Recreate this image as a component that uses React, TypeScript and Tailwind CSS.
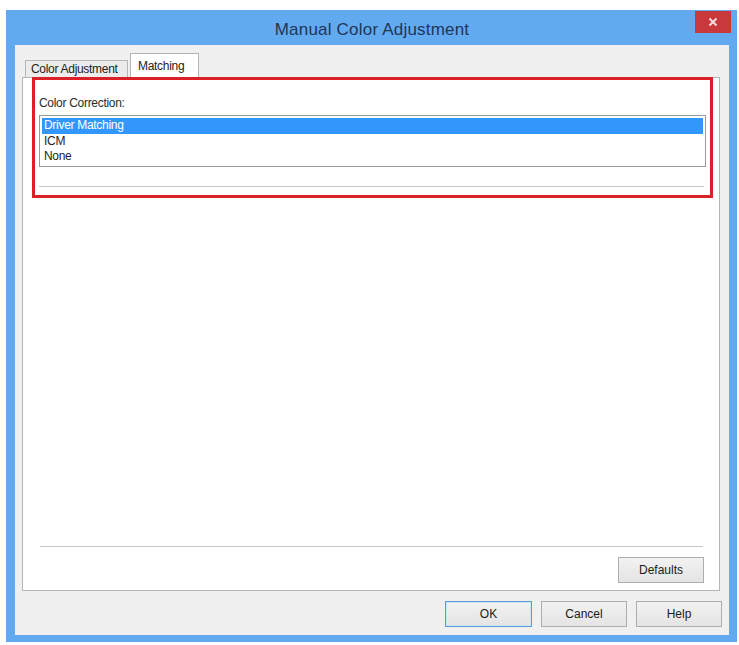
import React from 'react';

const font = { fontFamily: '"Liberation Sans", Arial, sans-serif' };

function WinButton({ label, primary }: { label: string; primary?: boolean }) {
  return (
    <button
      className={
        'h-[26px] text-[12px] text-[#1a1a1a] bg-gradient-to-b from-[#f2f2f2] to-[#e4e4e4] border ' +
        (primary ? 'border-[#5b9bd5] shadow-[inset_0_0_0_1px_#cfe6f7]' : 'border-[#adadad]')
      }
    >
      {label}
    </button>
  );
}

export default function App() {
  const items = ['Driver Matching', 'ICM', 'None'];

  return (
    <div className="w-[739px] h-[645px] bg-white pt-[10px] pl-[6px]" style={font}>
      <div className="w-[731px] h-[632px] bg-[#62aaf0] flex flex-col pl-[9px] pr-[8px] pb-[7px]">
        {/* title bar */}
        <div className="h-[35px] grid grid-cols-[1fr_auto_1fr] items-start">
          <div />
          <div className="pt-[7px] text-[17px] text-[#1f3556] tracking-[0.2px]">Manual Color Adjustment</div>
          <div className="flex justify-end pt-[1px] -mr-[2px]">
            <div className="w-[36px] h-[22px] bg-[#c9393b] flex items-center justify-center">
              <svg width="10" height="10" viewBox="0 0 10 10">
                <path d="M1.5 1.5 L8.5 8.5 M8.5 1.5 L1.5 8.5" stroke="#f6dede" strokeWidth="2" />
              </svg>
            </div>
          </div>
        </div>

        {/* client area */}
        <div className="flex-1 bg-[#f0f0f0] flex flex-col pl-[7px] pr-[9px] pt-[8px]">
          {/* tabs */}
          <div className="flex items-end h-[24px]">
            <div className="ml-[3px] w-[103px] h-[17px] pl-[5px] flex items-center text-[12px] text-[#222] bg-[#ececec] border border-b-0 border-[#b5b5b5] tracking-[-0.3px]">
              Color Adjustment
            </div>
            <div className="ml-[2px] h-[24px] w-[69px] pt-[3px] pl-[7px] text-[12px] text-[#222] bg-white border border-b-0 border-[#b5b5b5] tracking-[-0.3px]">
              Matching
            </div>
          </div>

          {/* tab panel */}
          <div className="h-[514px] bg-white border border-[#b5b5b5] flex flex-col pl-[9px] pr-[6px]">
            <div className="-mt-px h-[121px] border-[3px] border-[#dc2027] flex flex-col pl-[4px] pr-[4px]">
              <div className="pt-[14px] h-[35px] text-[12px] text-[#2a2a2a] tracking-[-0.3px]">Color Correction:</div>
              <div className="h-[52px] border border-[#9a9a9a] bg-white p-[2px] pb-0">
                {items.map((it, i) => (
                  <div
                    key={it}
                    className={
                      'h-[15.5px] leading-[15.5px] text-[12px] pl-[2px] tracking-[-0.3px] ' +
                      (i === 0 ? 'bg-[#3297fd] text-white' : 'text-[#1e1e1e]')
                    }
                  >
                    {it}
                  </div>
                ))}
              </div>
              <div className="mt-[19px] h-px bg-[#c8c8c8] mr-[2px]" />
            </div>

            <div className="flex-1" />
            <div className="h-px bg-[#c8c8c8] ml-[8px] mr-[10px]" />
            <div className="flex justify-end mr-[9px] mt-[10px] mb-[7px]">
              <div className="w-[86px] flex flex-col">
                <WinButton label="Defaults" />
              </div>
            </div>
          </div>

          {/* dialog buttons */}
          <div className="flex justify-end gap-[9px] mt-[10px] mr-[-2px]">
            <div className="w-[87px] flex flex-col"><WinButton label="OK" primary /></div>
            <div className="w-[86px] flex flex-col"><WinButton label="Cancel" /></div>
            <div className="w-[86px] flex flex-col"><WinButton label="Help" /></div>
          </div>
        </div>
      </div>
    </div>
  );
}
